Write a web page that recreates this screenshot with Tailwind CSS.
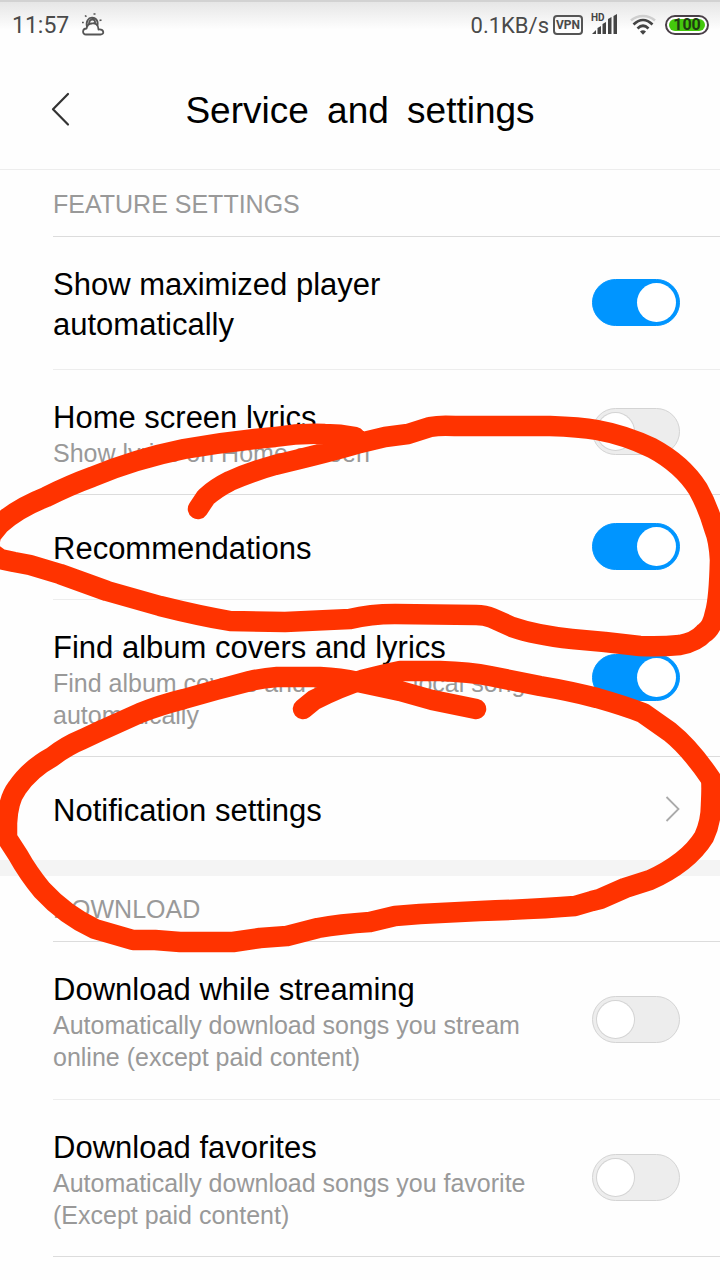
<!DOCTYPE html>
<html lang="en">
<head>
<meta charset="utf-8">
<meta name="viewport" content="width=device-width, initial-scale=1">
<title>Service and settings</title>
<script src="https://cdn.jsdelivr.net/npm/@tailwindcss/browser@4"></script>
</head>
<body class="relative min-h-screen overflow-x-hidden bg-[#fefefe] font-['Liberation_Sans',Arial,sans-serif] text-black">

<!-- Status bar -->
<div class="flex h-12 items-center justify-between border-t-2 border-[#d2d2d2] bg-linear-to-b from-[#e6e6e6] to-[#fefefe] to-60% pr-[11px] pl-3 font-[Roboto,sans-serif] text-[#4a4a4a]">
  <div class="flex items-center gap-3">
    <span class="pt-0.5 text-[23px] leading-7">11:57</span>
    <svg class="h-6 w-6" viewBox="0 0 24 24" fill="none" stroke="#555" stroke-width="1.800" aria-label="Partly cloudy">
      <path d="M5 21.500C1 21.500 1 15.500 5.500 15.500C6 12.500 8 10.500 11 10.500C14 9.500 17.500 12 17.500 16.500C23.500 16 23.500 21.500 19.500 21.500Z" stroke-linejoin="round"/>
      <path d="M6 14C3 2 18.500 1.500 16.500 12.500M8 11.500C8 5 15 5 14 10.500"/>
      <path d="M4 2.500l1.500 1.200M12.500 1h2M18.500 7.500l2-.6M1 9.500h1.800" stroke-width="1.600"/>
    </svg>
  </div>
  <div class="flex items-center">
    <span class="pt-0.5 text-[22px] leading-7">0.1KB/s</span>
    <span class="ml-1 flex h-5 w-[30px] items-center justify-center rounded-sm border-2 border-[#555] text-xs font-bold">VPN</span>
    <svg class="ml-2 h-6 w-7" viewBox="0 0 28 24" fill="#444" aria-label="HD signal">
      <text x="0" y="8" font-family="Roboto, sans-serif" font-size="10" font-weight="700">HD</text>
      <path d="M1 21l4-4v4zM6.500 15l3.500-2v8H6.500zM11.500 11l3.500-2v12h-3.500zM17 6l3.500-2v17H17zM22.500 3L26 1v20h-3.500z"/>
    </svg>
    <svg class="mr-2 ml-2.5 h-6 w-7" viewBox="0 0 28 24" fill="none" stroke="#444" stroke-width="2.600" aria-label="Wi-Fi">
      <path d="M2 7.500C9 1.500 19 1.500 26 7.500" stroke="#cfcfcf"/>
      <path d="M4.500 11.500C10.500 5.500 17.500 5.500 23.500 11.500M8.500 15.500C12 12 16 12 19.500 15.500"/>
      <path d="M11 18.500Q14 16 17 18.500L14 21.800z" fill="#444" stroke="none"/>
    </svg>
    <span class="flex h-5 w-11 rounded-full border-2 border-[#4a4048] bg-white p-0.5"><span class="flex flex-1 items-center justify-center rounded-full bg-[#44c80c] text-base leading-3 font-bold text-[#1f3a12]">100</span></span>
  </div>
</div>

<!-- Title bar -->
<header class="grid h-[122px] grid-cols-[1fr_auto_1fr] items-center border-b border-[#ededed] pr-10 pl-10">
  <button type="button" aria-label="Back" class="flex h-12 w-10 items-center justify-center">
    <svg class="h-9 w-5" viewBox="0 0 20 36" fill="none" stroke="#333" stroke-width="2.200" stroke-linecap="round" stroke-linejoin="round"><path d="M18 3 3 18.300 18 33.500"/></svg>
  </button>
  <h1 class="pt-1 text-[37px] leading-12">Service <span class="px-2">and</span> settings</h1>
</header>

<main>
  <section>
    <h2 class="ml-[53px] border-b border-[#dcdcdc] pt-[18px] pb-4 text-[25px] leading-8 text-[#999]">FEATURE SETTINGS</h2>

    <label class="ml-[53px] flex items-center justify-between border-b border-[#ededed] pr-10">
      <span class="pt-7 pb-6 text-[31px] leading-10">Show maximized player automatically</span>
      <input type="checkbox" checked class="mb-0.5 ml-12 h-[47px] w-22 shrink-0 appearance-none rounded-full border border-[#d4d4d4] bg-[#ededed] p-1 before:block before:size-[37px] before:rounded-full before:bg-white before:ring-1 before:ring-[#d4d4d4] checked:border-[#0095ff] checked:bg-[#0095ff] checked:before:ml-[41px] checked:before:ring-white">
    </label>

    <label class="ml-[53px] flex items-center justify-between border-b border-[#dcdcdc] pr-10">
      <span class="pt-7 pb-[25px]">
        <span class="block text-[31px] leading-[39px]">Home screen lyrics</span>
        <span class="block text-[25px] leading-8 text-[#999]">Show lyrics on Home screen</span>
      </span>
      <input type="checkbox" class="mb-0.5 ml-12 h-[47px] w-22 shrink-0 appearance-none rounded-full border border-[#d4d4d4] bg-[#ededed] p-1 before:block before:size-[37px] before:rounded-full before:bg-white before:ring-1 before:ring-[#d4d4d4] checked:border-[#0095ff] checked:bg-[#0095ff] checked:before:ml-[41px] checked:before:ring-white">
    </label>

    <label class="ml-[53px] flex min-h-[105px] items-center justify-between border-b border-[#ededed] pr-10">
      <span class="pt-1 text-[31px] leading-10">Recommendations</span>
      <input type="checkbox" checked class="mb-0.5 ml-12 h-[47px] w-22 shrink-0 appearance-none rounded-full border border-[#d4d4d4] bg-[#ededed] p-1 before:block before:size-[37px] before:rounded-full before:bg-white before:ring-1 before:ring-[#d4d4d4] checked:border-[#0095ff] checked:bg-[#0095ff] checked:before:ml-[41px] checked:before:ring-white">
    </label>

    <label class="ml-[53px] flex items-center justify-between border-b border-[#dcdcdc] pr-10">
      <span class="pt-7 pb-[25px]">
        <span class="block text-[31px] leading-[39px]">Find album covers and lyrics</span>
        <span class="block text-[25px] leading-8 text-[#999]">Find album covers and lyrics for local songs automatically</span>
      </span>
      <input type="checkbox" checked class="mb-0.5 ml-12 h-[47px] w-22 shrink-0 appearance-none rounded-full border border-[#d4d4d4] bg-[#ededed] p-1 before:block before:size-[37px] before:rounded-full before:bg-white before:ring-1 before:ring-[#d4d4d4] checked:border-[#0095ff] checked:bg-[#0095ff] checked:before:ml-[41px] checked:before:ring-white">
    </label>

    <a href="#notifications" class="ml-[53px] flex min-h-[103px] items-center justify-between pr-10">
      <span class="pt-1 text-[31px] leading-10">Notification settings</span>
      <svg class="h-7 w-4" viewBox="0 0 16 28" fill="none" stroke="#aaa" stroke-width="1.800"><path d="M2.500 2 14.500 14 2.500 26"/></svg>
    </a>
  </section>

  <section class="border-t-16 border-[#f4f4f4]">
    <h2 class="ml-[53px] border-b border-[#dcdcdc] pt-[17px] pb-4 text-[25px] leading-8 text-[#999]">DOWNLOAD</h2>

    <label class="ml-[53px] flex items-center justify-between border-b border-[#ededed] pr-10">
      <span class="pt-7 pb-[26px]">
        <span class="block text-[31px] leading-[39px]">Download while streaming</span>
        <span class="block text-[25px] leading-8 text-[#999]">Automatically download songs you stream online (except paid content)</span>
      </span>
      <input type="checkbox" class="mb-0.5 ml-12 h-[47px] w-22 shrink-0 appearance-none rounded-full border border-[#d4d4d4] bg-[#ededed] p-1 before:block before:size-[37px] before:rounded-full before:bg-white before:ring-1 before:ring-[#d4d4d4] checked:border-[#0095ff] checked:bg-[#0095ff] checked:before:ml-[41px] checked:before:ring-white">
    </label>

    <label class="ml-[53px] flex items-center justify-between border-b border-[#dcdcdc] pr-10">
      <span class="pt-7 pb-[25px]">
        <span class="block text-[31px] leading-[39px]">Download favorites</span>
        <span class="block text-[25px] leading-8 text-[#999]">Automatically download songs you favorite (Except paid content)</span>
      </span>
      <input type="checkbox" class="mb-0.5 ml-12 h-[47px] w-22 shrink-0 appearance-none rounded-full border border-[#d4d4d4] bg-[#ededed] p-1 before:block before:size-[37px] before:rounded-full before:bg-white before:ring-1 before:ring-[#d4d4d4] checked:border-[#0095ff] checked:bg-[#0095ff] checked:before:ml-[41px] checked:before:ring-white">
    </label>
  </section>
</main>

<!-- Hand-drawn marker circles -->
<svg class="pointer-events-none absolute top-0 left-0 w-full" viewBox="0 0 720 1280" fill="none" stroke="#ff3300" stroke-width="20.500" stroke-linecap="round" stroke-linejoin="round" aria-hidden="true">
  <path d="M198 509L206 497Q216 488 230 481Q250 472 275 465Q330 452 360 443L385 437L408 434L430 427Q440 425 455 426L550 426Q580 427 597 430Q625 435 652 448Q682 464 698 489Q708 507 714 528Q719 540 720 560Q719 600 715 613Q712 628 704 633Q696 642 680 645Q660 647 640 646L605 642L572 639Q535 635 512 627L492 618Q485 615 476 615L395 614Q370 614 350 619L285 622L230 621Q200 616 160 606L107 591L60 574L30 565L14 562L0 559L-12 550L-9 535L0 524Q18 508 46 497Q70 485 92 477Q135 459 184 449Q230 441 275 437Q300 433 325 434Q340 434 355 437"/>
  <path d="M303 709L314 700Q340 687 362 680Q385 674 400 671L440 671Q470 672 490 676L540 686Q570 691 597 698Q625 706 643 713L670 732Q690 748 711 779Q712 785 711 805Q711 822 704 837Q696 850 682 861Q668 872 650 880L625 888L600 899L592 901L575 906Q540 909 480 911L420 914L395 916L370 922Q340 924 318 928L287 936L260 938L233 942L180 942L155 940L133 940L95 929Q65 915 42 890Q28 873 18 855L7 838L7 823Q8 800 17 788Q30 769 52 757Q66 746 83 739L100 731L140 713Q160 705 184 699L216 690L250 681Q263 678 277 677L320 677Q340 678 358 682L400 691L432 700L476 709"/>
</svg>
</body>
</html>
